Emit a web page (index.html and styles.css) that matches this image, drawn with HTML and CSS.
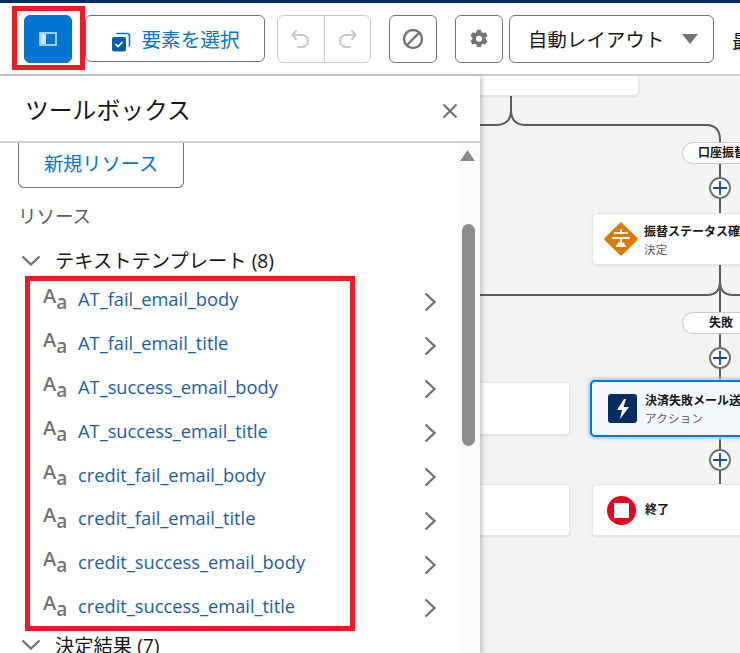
FILE: index.html
```html
<!DOCTYPE html>
<html lang="ja">
<head>
<meta charset="utf-8">
<title>ツールボックス</title>
<link rel="stylesheet" href="styles.css">
</head>
<body>
<div class="topline"></div>
<header class="toolbar">
  <button class="btn square primary">
    <svg width="18" height="14" viewBox="0 0 18 14"><rect x="1" y="1" width="16" height="12" fill="none" stroke="#cfe3f5" stroke-width="1.6"/><rect x="2" y="2" width="5" height="10" fill="#cfe3f5"/></svg>
  </button>
  <button class="btn select">
    <svg width="20" height="20" viewBox="0 0 20 20"><path d="M6 1.500h10a2.500 2.500 0 0 1 2.500 2.500v10" fill="none" stroke="#0176d3" stroke-width="1.600" stroke-linecap="round"/><rect x="1" y="5" width="14" height="14.500" rx="2" fill="#0b5cab"/><path d="M4.500 12l2.500 2.500 4.500-4.500" fill="none" stroke="#fff" stroke-width="1.600"/></svg>
    <span>要素を選択</span>
  </button>
  <div class="group">
    <span class="gcell"><svg width="24" height="24" viewBox="0 0 24 24"><path d="M7 4L3.500 8 7 12M4 8h9a6 6 0 0 1 0 12h-4" fill="none" stroke="#c9c9c9" stroke-width="2.200" stroke-linecap="round" stroke-linejoin="round"/></svg></span>
    <span class="gcell"><svg width="24" height="24" viewBox="0 0 24 24"><path d="M17 4l3.500 4L17 12M20 8h-9a6 6 0 0 0 0 12h4" fill="none" stroke="#c9c9c9" stroke-width="2.200" stroke-linecap="round" stroke-linejoin="round"/></svg></span>
  </div>
  <button class="btn square stop">
    <svg width="22" height="22" viewBox="0 0 22 22"><circle cx="11" cy="11" r="9" fill="none" stroke="#747474" stroke-width="2.400"/><path d="M5 17L17 5" stroke="#747474" stroke-width="2.400"/></svg>
  </button>
  <button class="btn square gear">
    <svg width="20" height="20" viewBox="0 0 20 20"><path fill="#747474" fill-rule="evenodd" d="M8 .8h4l.6 2.500 1.500.8 2.400-.8 2 3.400-1.800 1.800v1.800l1.800 1.800-2 3.400-2.400-.8-1.500.8-.6 2.500H8l-.6-2.500-1.500-.8-2.400.8-2-3.400 1.800-1.800V8.500L1.500 6.700l2-3.400 2.400.8 1.500-.8zM10 6.800a3 3 0 1 0 0 6 3 3 0 0 0 0-6z"/></svg>
  </button>
  <button class="btn layout">
    <span>自動レイアウト</span>
    <svg width="16" height="10" viewBox="0 0 16 10"><path d="M0 0h16L8 10z" fill="#747474"/></svg>
  </button>
  <span class="cut">最</span>
</header>
<main class="workspace">
  <aside class="panel">
    <div class="panel-head">
      <h1>ツールボックス</h1>
      <svg width="16" height="16" viewBox="0 0 16 16"><path d="M1.500 1.500l13 13M14.500 1.500l-13 13" stroke="#747474" stroke-width="2.200"/></svg>
    </div>
    <div class="panel-body">
      <div class="list">
        <button class="newres">新規リソース</button>
        <div class="label">リソース</div>
        <div class="section"><svg width="20" height="11" viewBox="0 0 20 11"><path d="M1.500 1.500L10 9.500l8.500-8" fill="none" stroke="#747474" stroke-width="2.400"/></svg><span>テキストテンプレート (8)</span></div>
        <ul class="items">
          <li><span class="aa">A<small>a</small></span><a>AT_fail_email_body</a><svg class="go" width="12" height="20" viewBox="0 0 12 20"><path d="M1.500 1.500L10.500 10l-9 8.500" fill="none" stroke="#747474" stroke-width="2.400"/></svg></li>
          <li><span class="aa">A<small>a</small></span><a>AT_fail_email_title</a><svg class="go" width="12" height="20" viewBox="0 0 12 20"><path d="M1.500 1.500L10.500 10l-9 8.500" fill="none" stroke="#747474" stroke-width="2.400"/></svg></li>
          <li><span class="aa">A<small>a</small></span><a>AT_success_email_body</a><svg class="go" width="12" height="20" viewBox="0 0 12 20"><path d="M1.500 1.500L10.500 10l-9 8.500" fill="none" stroke="#747474" stroke-width="2.400"/></svg></li>
          <li><span class="aa">A<small>a</small></span><a>AT_success_email_title</a><svg class="go" width="12" height="20" viewBox="0 0 12 20"><path d="M1.500 1.500L10.500 10l-9 8.500" fill="none" stroke="#747474" stroke-width="2.400"/></svg></li>
          <li><span class="aa">A<small>a</small></span><a>credit_fail_email_body</a><svg class="go" width="12" height="20" viewBox="0 0 12 20"><path d="M1.500 1.500L10.500 10l-9 8.500" fill="none" stroke="#747474" stroke-width="2.400"/></svg></li>
          <li><span class="aa">A<small>a</small></span><a>credit_fail_email_title</a><svg class="go" width="12" height="20" viewBox="0 0 12 20"><path d="M1.500 1.500L10.500 10l-9 8.500" fill="none" stroke="#747474" stroke-width="2.400"/></svg></li>
          <li><span class="aa">A<small>a</small></span><a>credit_success_email_body</a><svg class="go" width="12" height="20" viewBox="0 0 12 20"><path d="M1.500 1.500L10.500 10l-9 8.500" fill="none" stroke="#747474" stroke-width="2.400"/></svg></li>
          <li><span class="aa">A<small>a</small></span><a>credit_success_email_title</a><svg class="go" width="12" height="20" viewBox="0 0 12 20"><path d="M1.500 1.500L10.500 10l-9 8.500" fill="none" stroke="#747474" stroke-width="2.400"/></svg></li>
        </ul>
        <div class="section last"><svg width="20" height="11" viewBox="0 0 20 11"><path d="M1.500 1.500L10 9.500l8.500-8" fill="none" stroke="#747474" stroke-width="2.400"/></svg><span>決定結果 (7)</span></div>
      </div>
      <div class="scrollbar">
        <svg class="arrow" width="15" height="11" viewBox="0 0 15 11"><path d="M7.500 0L15 11H0z" fill="#8c8c8c"/></svg>
        <div class="thumb"></div>
      </div>
    </div>
  </aside>
  <section class="canvas">
    <svg class="wires" width="260" height="578" viewBox="0 0 260 578">
      <g fill="none" stroke="#5c5c5c" stroke-width="2">
        <path d="M31 20V34q0 15-15 15H0"/>
        <path d="M31 20V34q0 15 15 15H226q14 0 14 15V85"/>
        <path d="M240 88V137"/>
        <path d="M240 189V205q0 14-13 14H0"/>
        <path d="M240 205q0 14 13 14H260"/>
        <path d="M240 205V236M240 258V304M240 361V409"/>
      </g>
    </svg>
    <div class="card topcard"></div>
    <div class="pill p1">口座振替</div>
    <div class="plus a1"><svg width="16" height="16" viewBox="0 0 16 16"><path d="M8 1v14M1 8h14" stroke="#0b4f9e" stroke-width="1.800"/></svg></div>
    <div class="card decision">
      <svg width="36" height="36" viewBox="0 0 36 36"><path d="M18 1l16 15.500a2 2 0 0 1 0 3L18 35 2 19.500a2 2 0 0 1 0-3z" fill="#dd7a01"/><path d="M11 11h14v2H11zM9 16h18v2H9zM13 24h10v2H13zM15 21.500h6L22 24h-8zM17 8.500h2v3h-2zM17 18h2v4h-2z" fill="#fff"/></svg>
      <div><b>振替ステータス確認</b><small>決定</small></div>
    </div>
    <div class="pill p2">失敗</div>
    <div class="plus a2"><svg width="16" height="16" viewBox="0 0 16 16"><path d="M8 1v14M1 8h14" stroke="#0b4f9e" stroke-width="1.800"/></svg></div>
    <div class="card stub s1"></div>
    <div class="card action">
      <span class="bolt"><svg width="16" height="22" viewBox="0 0 16 22"><path d="M9 1L2 12h5l-2 9 9-12H8.500L11 1z" fill="#fff"/></svg></span>
      <div><b>決済失敗メール送信</b><small>アクション</small></div>
    </div>
    <div class="plus a3"><svg width="16" height="16" viewBox="0 0 16 16"><path d="M8 1v14M1 8h14" stroke="#0b4f9e" stroke-width="1.800"/></svg></div>
    <div class="card stub s2"></div>
    <div class="card end">
      <span class="stopdot"><i></i></span>
      <b>終了</b>
    </div>
  </section>
</main>
<div class="mark m1"></div>
<div class="mark m2"></div>
</body>
</html>
```
FILE: styles.css
```css
* { box-sizing: border-box; }
html, body { margin: 0; height: 653px; overflow: hidden; }
body { font-family: "Open Sans", "Noto Sans CJK JP", sans-serif; color: #181818; background: #fff; position: relative; display: flex; flex-direction: column; }
button { font: inherit; background: #fff; padding: 0; }
svg { display: block; flex: none; }

.topline { height: 3px; background: #032d60; flex: none; }
.toolbar { height: 73px; flex: none; display: flex; align-items: flex-start; padding: 12px 0 0 24px; border-bottom: 2px solid #d0d0d0; white-space: nowrap; overflow: hidden; }
.btn { height: 48px; border: 1px solid #747474; border-radius: 6px; display: flex; align-items: center; justify-content: center; flex: none; }
.square { width: 48px; }
.primary { background: #0176d3; border-color: #0176d3; }
.select { width: 180px; height: 47px; margin-left: 13px; gap: 11px; color: #0176d3; font-size: 19.600px; }
.select svg { margin-top: 6px; }
.group { display: flex; width: 94px; height: 48px; margin-left: 12px; border: 1px solid #c9c9c9; border-radius: 6px; flex: none; }
.gcell { flex: 1; display: flex; align-items: center; justify-content: center; }
.gcell + .gcell { border-left: 1px solid #c9c9c9; }
.stop { margin-left: 18px; }
.gear { margin-left: 18px; }
.layout { width: 205px; margin-left: 6px; justify-content: space-between; padding: 0 15px 0 18px; font-size: 19.300px; color: #181818; letter-spacing: .2px; }
.cut { font-size: 19px; margin: 12px 0 0 18px; }

.workspace { flex: 1; display: flex; min-height: 0; }
.panel { width: 480px; flex: none; display: flex; flex-direction: column; background: #fff; box-shadow: 2px 0 5px rgba(0,0,0,.22); position: relative; z-index: 2; }
.panel-head { height: 67px; flex: none; display: flex; align-items: center; justify-content: space-between; padding: 0 22px 0 25px; border-bottom: 2px solid #d0d0d0; }
.panel-head h1 { margin: 0; font-size: 23.800px; font-weight: 400; }
.panel-head svg { margin-top: 4px; }
.panel-body { flex: 1; display: flex; min-height: 0; overflow: hidden; }
.list { flex: 1; padding-left: 18px; }
.newres { display: block; width: 166px; height: 45px; padding-bottom: 4px; border: 1px solid #747474; border-top: 0; border-radius: 0 0 6px 6px; color: #0176d3; font-size: 19.200px; }
.label { margin: 15px 0 0 0; font-size: 18.500px; line-height: 26px; color: #5c5c5c; }
.section { display: flex; align-items: center; gap: 14px; margin: 18px 0 0 3px; height: 26px; font-size: 19.300px; white-space: nowrap; }
.section.last { margin-top: 4.500px; }
.items { list-style: none; margin: 0; padding: 4px 0 0 25px; }
.items li { height: 43.800px; display: flex; align-items: center; }
.items a { flex: 1; margin-left: 12px; font-size: 18.300px; color: #1b5ea8; }
.items .go { margin: 6px 21px 0 0; }
.aa { width: 23px; font-size: 20px; font-weight: 600; line-height: 1; color: #747474; margin-top: -5px; white-space: nowrap; }
.aa small { font-size: 19px; font-weight: 600; position: relative; top: 6px; left: 0; }

.scrollbar { width: 23px; flex: none; background: #fafafa; display: flex; flex-direction: column; align-items: center; padding: 7px 0 0 0; }
.arrow { margin-right: 3px; }
.thumb { width: 13px; height: 222px; margin: 63px 1px 0 0; background: #8c8c8c; border-radius: 7px; }

.canvas { flex: 1; position: relative; overflow: hidden; background: #f3f3f3; }
.wires { position: absolute; left: 0; top: 0; }
.card { position: absolute; background: #fff; border: 1px solid #e5e5e5; border-radius: 4px; box-shadow: 0 1px 2px rgba(0,0,0,.08); }
.card b { display: block; padding-top: 2px; font-size: 12px; line-height: 18px; font-weight: 700; white-space: nowrap; color: #181818; }
.card small { display: block; font-size: 11.500px; line-height: 17px; color: #5c5c5c; letter-spacing: .3px; }
.topcard { left: -20px; top: -20px; width: 179px; height: 40px; }
.decision, .action, .end { left: 112px; width: 200px; display: flex; align-items: center; gap: 5px; padding-left: 10px; }
.decision { top: 137px; height: 52px; }
.pill { position: absolute; left: 202px; width: 90px; height: 22px; background: #fff; border: 1px solid #c9c9c9; border-radius: 11px; font-size: 12px; font-weight: 700; line-height: 20px; padding-left: 15px; white-space: nowrap; }
.p1 { top: 66px; }
.p2 { top: 236px; padding-left: 26px; }
.plus { position: absolute; left: 229px; width: 22px; height: 22px; border: 2px solid #747474; border-radius: 50%; background: #fff; display: flex; align-items: center; justify-content: center; }
.a1 { top: 101px; }
.a2 { top: 271px; }
.a3 { top: 373px; }
.stub { left: -20px; width: 110px; }
.s1 { top: 306px; height: 53px; }
.s2 { top: 408px; height: 52px; }
.action { top: 304px; left: 110px; height: 57px; padding-left: 16px; gap: 8px; background: #f3f6fb; border: 2px solid #0176d3; border-radius: 5px; box-shadow: 0 0 3px 2px #a9d3f2; }
.bolt { width: 29px; height: 29px; border-radius: 3px; background: #032d60; display: flex; align-items: center; justify-content: center; }
.end { top: 408px; height: 52px; padding-left: 14px; gap: 9px; }
.end b { padding-top: 0; }
.stopdot { width: 29px; height: 29px; border-radius: 50%; background: #ea001e; display: flex; align-items: center; justify-content: center; }
.stopdot i { width: 15px; height: 15px; background: #fff; display: block; }

.mark { position: absolute; border: 4px solid #ed1c24; pointer-events: none; z-index: 5; }
.m1 { left: 12px; top: 6px; width: 73px; height: 64px; border-width: 5px; }
.m2 { left: 25px; top: 276px; width: 330px; height: 355px; border-width: 5px; }
```
